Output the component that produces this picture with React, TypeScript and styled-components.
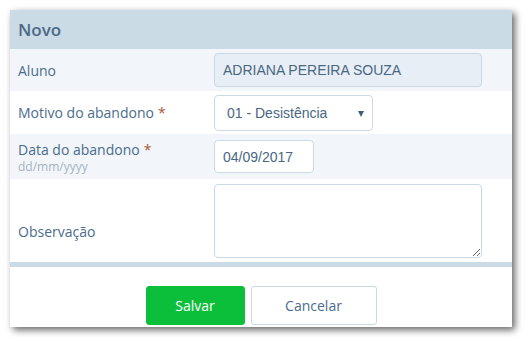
import React from "react";
import styled, { createGlobalStyle } from "styled-components";

const Global = createGlobalStyle`
  html, body { margin: 0; padding: 0; background: #ffffff; }
  body { padding: 10px; font-family: "Open Sans", "Liberation Sans", sans-serif; }
  * { box-sizing: border-box; }
`;

const Panel = styled.div`
  width: 502px;
  height: 317px;
  background: #ffffff;
  box-shadow: 3px 3px 7px rgba(0, 0, 0, 0.6);
  display: flex;
  flex-direction: column;
  overflow: hidden;
`;

const Header = styled.div`
  height: 39px;
  background: #cbdbe5;
  display: flex;
  align-items: center;
  padding-left: 8px;
  font-size: 17px;
  font-weight: 600;
  color: #4a6a87;
`;

const Row = styled.div<{ $alt?: boolean; $h: number }>`
  display: grid;
  grid-template-columns: 204px 1fr;
  height: ${(p) => p.$h}px;
  background: ${(p) => (p.$alt ? "#f2f6fa" : "#ffffff")};
  align-items: center;
`;

const Label = styled.div<{ $bottom?: boolean }>`
  padding-left: 8px;
  font-size: 14px;
  color: #4b6c8c;
  line-height: 19px;
  align-self: ${(p) => (p.$bottom ? "end" : "center")};
  padding-bottom: ${(p) => (p.$bottom ? "21px" : "0")};
`;

const Star = styled.span`
  color: #a65a35;
  margin-left: 4px;
`;

const Hint = styled.div`
  font-size: 12px;
  color: #a7b3be;
  line-height: 15px;
`;

const inputBase = `
  font-family: "Liberation Sans", Arial, sans-serif;
  font-size: 14px;
  color: #4a6782;
  border: 1px solid #ccd9e4;
  border-radius: 4px;
  outline: none;
`;

const TextInput = styled.input<{ $w: number; $h: number; $disabled?: boolean }>`
  ${inputBase}
  width: ${(p) => p.$w}px;
  height: ${(p) => p.$h}px;
  padding: 0 8px;
  background: ${(p) => (p.$disabled ? "#e8eef5" : "#ffffff")};
`;

const SelectWrap = styled.div`
  position: relative;
  width: 159px;
  height: 36px;
`;

const Select = styled.select`
  ${inputBase}
  appearance: none;
  -webkit-appearance: none;
  width: 100%;
  height: 100%;
  padding: 0 0 0 12px;
  background: #ffffff;
`;

const Arrow = styled.span`
  position: absolute;
  right: 9px;
  top: 16px;
  width: 0;
  height: 0;
  border-left: 3px solid transparent;
  border-right: 3px solid transparent;
  border-top: 6px solid #3d5f7c;
  pointer-events: none;
`;

const TextArea = styled.textarea`
  ${inputBase}
  width: 268px;
  height: 74px;
  resize: vertical;
  background: #ffffff;
  display: block;
`;

const Separator = styled.div`
  height: 5px;
  background: #cbdbe5;
`;

const Footer = styled.div`
  flex: 1;
  display: flex;
  justify-content: center;
  align-items: flex-start;
  gap: 6px;
  padding-top: 19px;
`;

const Button = styled.button<{ $primary?: boolean; $w: number }>`
  width: ${(p) => p.$w}px;
  height: 39px;
  border-radius: 3px;
  font-family: "Open Sans", sans-serif;
  font-size: 14px;
  cursor: pointer;
  border: 1px solid ${(p) => (p.$primary ? "#0bbf3a" : "#ccd9e4")};
  background: ${(p) => (p.$primary ? "#0bbf3a" : "#ffffff")};
  color: ${(p) => (p.$primary ? "#ffffff" : "#4b6c8c")};
`;

export default function App() {
  return (
    <>
      <Global />
      <Panel>
        <Header>Novo</Header>
        <Row $alt $h={42}>
          <Label>Aluno</Label>
          <TextInput $w={268} $h={34} $disabled readOnly value="ADRIANA PEREIRA SOUZA" />
        </Row>
        <Row $h={43}>
          <Label>
            Motivo do abandono<Star>*</Star>
          </Label>
          <SelectWrap>
            <Select defaultValue="01">
              <option value="01">01 - Desistência</option>
            </Select>
            <Arrow />
          </SelectWrap>
        </Row>
        <Row $alt $h={45}>
          <Label>
            Data do abandono<Star>*</Star>
            <Hint>dd/mm/yyyy</Hint>
          </Label>
          <TextInput $w={100} $h={33} readOnly value="04/09/2017" />
        </Row>
        <Row $h={83}>
          <Label $bottom>Observação</Label>
          <TextArea />
        </Row>
        <Separator />
        <Footer>
          <Button $primary $w={99}>Salvar</Button>
          <Button $w={126}>Cancelar</Button>
        </Footer>
      </Panel>
    </>
  );
}
